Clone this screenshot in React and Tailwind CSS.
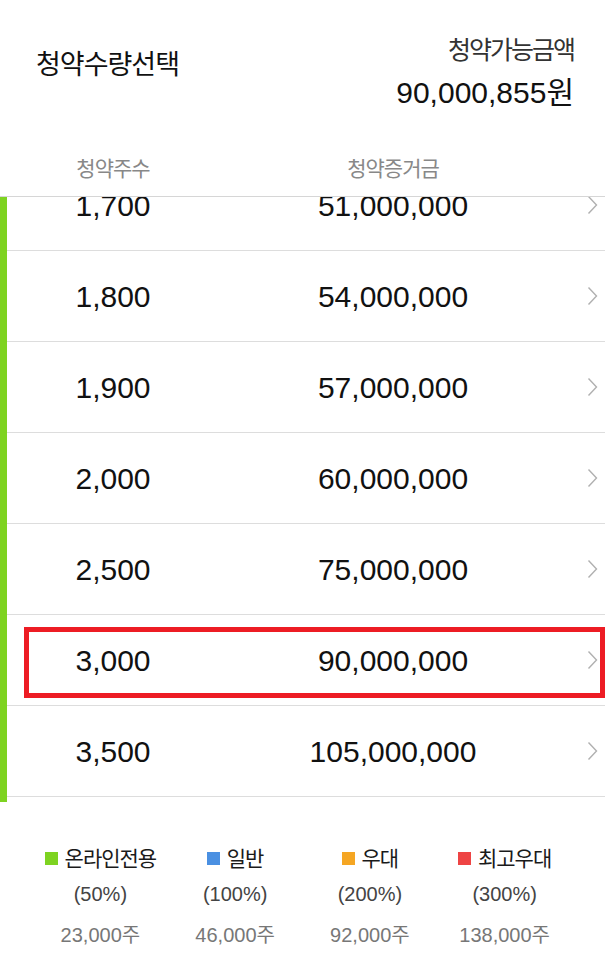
import React from "react";

const rows = [
  ["1,700", "51,000,000"],
  ["1,800", "54,000,000"],
  ["1,900", "57,000,000"],
  ["2,000", "60,000,000"],
  ["2,500", "75,000,000"],
  ["3,000", "90,000,000"],
  ["3,500", "105,000,000"],
];

const legend = [
  { color: "bg-[#7ed321]", label: "온라인전용", pct: "(50%)", qty: "23,000주" },
  { color: "bg-[#4a90e2]", label: "일반", pct: "(100%)", qty: "46,000주" },
  { color: "bg-[#f5a623]", label: "우대", pct: "(200%)", qty: "92,000주" },
  { color: "bg-[#ee4444]", label: "최고우대", pct: "(300%)", qty: "138,000주" },
];

function Chevron() {
  return (
    <svg width="11" height="20" viewBox="0 0 11 20" className="block">
      <path d="M1.5 1.5 L9.5 10 L1.5 18.5" fill="none" stroke="#b0b0b0" strokeWidth="1.4" />
    </svg>
  );
}

export default function App() {
  return (
    <div
      className="relative w-[605px] h-[965px] bg-white overflow-hidden"
      style={{ fontFamily: '"Liberation Sans", "Noto Sans CJK KR", sans-serif' }}
    >
      {/* Header */}
      <div className="flex h-[140px] items-start justify-between pl-[36px] pr-[31px]">
        <div className="mt-[47px] text-[27px] leading-[36px] tracking-[-1px] text-[#111]">청약수량선택</div>
        <div className="mt-[33px] flex flex-col items-end">
          <div className="text-[25px] leading-[34px] tracking-[-2px] text-[#333]">청약가능금액</div>
          <div className="mt-[8px] text-[30px] leading-[35px] text-[#111]">90,000,855원</div>
        </div>
      </div>

      {/* Column headers */}
      <div className="flex h-[57px] items-start border-b border-[#d6d6d6] pl-[7px]">
        <div className="mt-[15px] w-[212px] text-center text-[21px] leading-[28px] tracking-[-1px] text-[#888]">청약주수</div>
        <div className="mt-[15px] w-[348px] text-center text-[21px] leading-[28px] tracking-[-1px] text-[#888]">청약증거금</div>
      </div>

      {/* List */}
      <div className="h-[605px] overflow-hidden border-l-[7px] border-[#7ed321]">
        <div className="mt-[-37px]">
          {rows.map(([a, b]) => (
            <div key={a} className="box-border flex h-[91px] items-center border-b border-[#dddddd]">
              <div className="w-[212px] text-center text-[30px] text-[#111]">{a}</div>
              <div className="w-[348px] text-center text-[30px] text-[#111]">{b}</div>
              <div className="ml-[20px]">
                <Chevron />
              </div>
            </div>
          ))}
        </div>
      </div>

      {/* Highlight overlay */}
      <div className="pointer-events-none absolute left-[24px] top-[627px] h-[71px] w-[581px] border-[5px] border-[#ed1c24]" />

      {/* Legend */}
      <div className="grid grid-cols-4 px-[33px] pt-[43px]">
        {legend.map((l) => (
          <div key={l.label} className="flex flex-col items-center">
            <div className="flex items-center gap-[7px]">
              <span className={`block h-[13px] w-[13px] ${l.color} -mt-[2px]`} />
              <span className="text-[21px] leading-[28px] tracking-[-1px] text-[#1a1a1a]">{l.label}</span>
            </div>
            <div className="mt-[7px] text-[20px] leading-[28px] text-[#444]">{l.pct}</div>
            <div className="mt-[13px] text-[20px] leading-[28px] text-[#777]">{l.qty}</div>
          </div>
        ))}
      </div>
    </div>
  );
}
